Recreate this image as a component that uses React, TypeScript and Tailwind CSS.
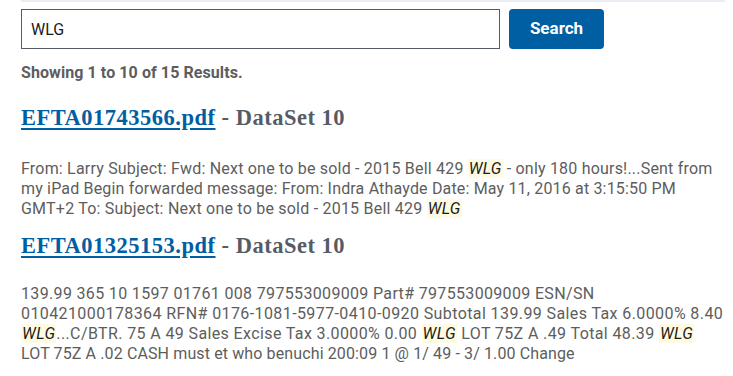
import React from "react";

const HL = ({ children }: { children: React.ReactNode }) => (
  <em className="italic text-[#1b1b1b] bg-[#fffbe3] px-[1px]">{children}</em>
);

type Line = { t: string; c: React.ReactNode };

function Result({ file, lines, gap }: { file: string; lines: Line[]; gap: string }) {
  return (
    <div>
      <h2 className="font-['Liberation_Serif',serif] font-bold text-[22.5px] leading-[28px] tracking-[0.5px] text-[#565c65]">
        <a href="#" className="text-[#005ea2] underline underline-offset-[3px] decoration-[2px]">{file}</a>
        <span> - DataSet 10</span>
      </h2>
      <div className={"font-['Roboto',sans-serif] text-[16px] leading-[20px] text-[#5d5d5d] " + gap}>
        {lines.map((l, i) => (
          <div key={i} className={"whitespace-nowrap " + l.t}>{l.c}</div>
        ))}
      </div>
    </div>
  );
}

export default function App() {
  return (
    <div className="w-[733px] h-[376px] bg-white overflow-hidden">
      <div className="ml-[21px] mr-[8px] h-[2px] bg-[#eaeef4]" />
      <div className="pl-[21px]">
        <div className="flex mt-[7px] gap-[9px]">
          <input
            readOnly
            value="WLG"
            className="w-[479px] h-[40px] border border-[#565c65] px-[9px] font-['Roboto',sans-serif] text-[16px] text-[#1b1b1b] outline-none"
          />
          <button className="w-[95px] h-[40px] rounded-[4px] bg-[#005ea2] text-white font-['Roboto',sans-serif] font-bold text-[17px]">
            Search
          </button>
        </div>
        <p className="mt-[14px] font-['Roboto',sans-serif] font-bold text-[16px] leading-[20px] tracking-[0.08px] text-[#5d5d5d]">
          Showing 1 to 10 of 15 Results.
        </p>
        <div className="mt-[21px]">
          <Result
            file="EFTA01743566.pdf"
            gap="mt-[27px]"
            lines={[
              { t: "tracking-[0.2px]", c: <>From: Larry Subject: Fwd: Next one to be sold - 2015 Bell 429 <HL>WLG</HL> - only 180 hours!...Sent from</> },
              { t: "tracking-[0.17px]", c: <>my iPad Begin forwarded message: From: Indra Athayde Date: May 11, 2016 at 3:15:50 PM</> },
              { t: "tracking-[0.22px]", c: <>GMT+2 To: Subject: Next one to be sold - 2015 Bell 429 <HL>WLG</HL></> },
            ]}
          />
        </div>
        <div className="mt-[13px]">
          <Result
            file="EFTA01325153.pdf"
            gap="mt-[24px]"
            lines={[
              { t: "tracking-[0.34px]", c: <>139.99 365 10 1597 01761 008 797553009009 Part# 797553009009 ESN/SN</> },
              { t: "tracking-[0.4px]", c: <>010421000178364 RFN# 0176-1081-5977-0410-0920 Subtotal 139.99 Sales Tax 6.0000% 8.40</> },
              { t: "tracking-[0.38px]", c: <><HL>WLG</HL>...C/BTR. 75 A 49 Sales Excise Tax 3.0000% 0.00 <HL>WLG</HL> LOT 75Z A .49 Total 48.39 <HL>WLG</HL></> },
              { t: "tracking-[0.12px]", c: <>LOT 75Z A .02 CASH must et who benuchi 200:09 1 @ 1/ 49 - 3/ 1.00 Change</> },
            ]}
          />
        </div>
      </div>
    </div>
  );
}
